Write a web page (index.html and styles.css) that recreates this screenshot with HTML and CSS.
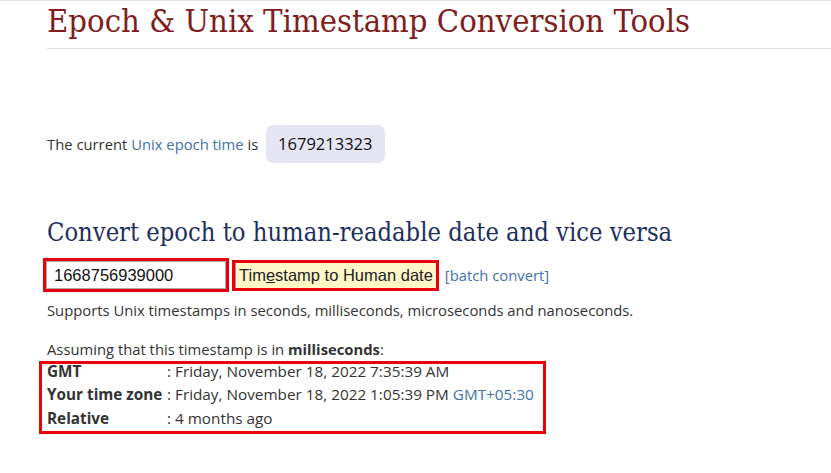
FILE: index.html
```html
<!DOCTYPE html>
<html>
<head>
<meta charset="utf-8">
<link rel="stylesheet" href="styles.css">
</head>
<body>
<div class="page">
  <header class="head">
    <h1 class="title">Epoch &amp; Unix Timestamp Conversion Tools</h1>
  </header>
  <div class="content">
    <p class="current">The current <a class="lnk" href="#">Unix epoch time</a> is <span class="now">1679213323</span></p>
    <h2 class="sub">Convert epoch to human-readable date and vice versa</h2>
    <div class="form">
      <span class="mark"><input class="ts" type="text" value="1668756939000"></span>
      <span class="mark btnmark"><button class="btn">Tim<u>e</u>stamp to Human date</button></span>
      <a class="lnk batch" href="#">[batch convert]</a>
    </div>
    <p class="note">Supports Unix timestamps in seconds, milliseconds, microseconds and nanoseconds.</p>
    <p class="assume">Assuming that this timestamp is in <b>milliseconds</b>:</p>
    <div class="result">
      <table class="tbl">
        <tr><td class="k">GMT</td><td>: Friday, November 18, 2022 7:35:39 AM</td></tr>
        <tr><td class="k">Your time zone</td><td>: Friday, November 18, 2022 1:05:39 PM <span class="tz">GMT+05:30</span></td></tr>
        <tr><td class="k">Relative</td><td>: 4 months ago</td></tr>
      </table>
    </div>
  </div>
</div>
</body>
</html>
```
FILE: styles.css
```css
html, body { margin: 0; padding: 0; background: #fff; }
body {
  font-family: "Open Sans", "DejaVu Sans", sans-serif;
  font-size: 14.8px;
  color: #333;
  border-top: 1px solid #e2e2e2;
}
.page { padding-left: 47px; }
.head {
  border-bottom: 1px solid #dcdcdc;
  height: 47px;
}
.title {
  margin: 0;
  font-family: "DejaVu Serif Condensed", "DejaVu Serif", serif;
  font-weight: normal;
  font-size: 32.5px;
  line-height: 40px;
  color: #801d1d;
  white-space: nowrap;
}
.content { padding-top: 76px; }
.current {
  margin: 0;
  display: flex;
  align-items: center;
  white-space: pre;
  height: 38px;
}
.lnk { color: #3f72a8; text-decoration: none; }
.now {
  margin-left: 4px;
  background: #e6e5f3;
  border-radius: 7px;
  padding: 0 13px 0 12px;
  height: 38px;
  line-height: 38px;
  font-size: 16.5px;
  color: #111;
}
.sub {
  margin: 54px 0 0;
  font-family: "DejaVu Serif Condensed", "DejaVu Serif", serif;
  font-weight: normal;
  font-size: 25.3px;
  line-height: 32px;
  color: #1d2f5e;
  white-space: nowrap;
}
.form {
  margin-top: 9px;
  margin-left: -4px;
  display: flex;
  align-items: center;
  gap: 3px;
}
.mark {
  display: flex;
  border: 3px solid #e8000b;
}
.ts {
  width: 180px;
  height: 28px;
  box-sizing: border-box;
  border: 1px solid #aaa;
  margin: 0;
  padding: 0 7px;
  font-family: "Liberation Sans", Arial, sans-serif;
  font-size: 16.5px;
  color: #111;
  outline: none;
}
.btn {
  margin: 0;
  height: 25px;
  border: 0;
  border-left: 1px solid #999;
  background: #fff7c8;
  font-family: "Liberation Sans", Arial, sans-serif;
  font-size: 16.5px;
  color: #222;
  padding: 0 3px 0 3px;
}
.btn u { text-decoration: underline; }
.batch { margin-left: 3px; }
.note { margin: 8px 0 0; line-height: 20px; }
.assume { margin: 19px 0 0; line-height: 20px; }
.result {
  margin-top: 2px;
  margin-left: -8px;
  width: 496px;
  border: 3px solid #e8000b;
  padding: 0 0 1px 5px;
}
.tbl { border-collapse: collapse; margin-top: -5px; font-size: 15.3px; }
.tbl tr { height: 23.5px; }
.tbl td { padding: 0; line-height: 20px; white-space: nowrap; }
.tbl .k { font-weight: bold; width: 118px; padding-right: 2px; }
.tz { color: #3f72a8; }
```
